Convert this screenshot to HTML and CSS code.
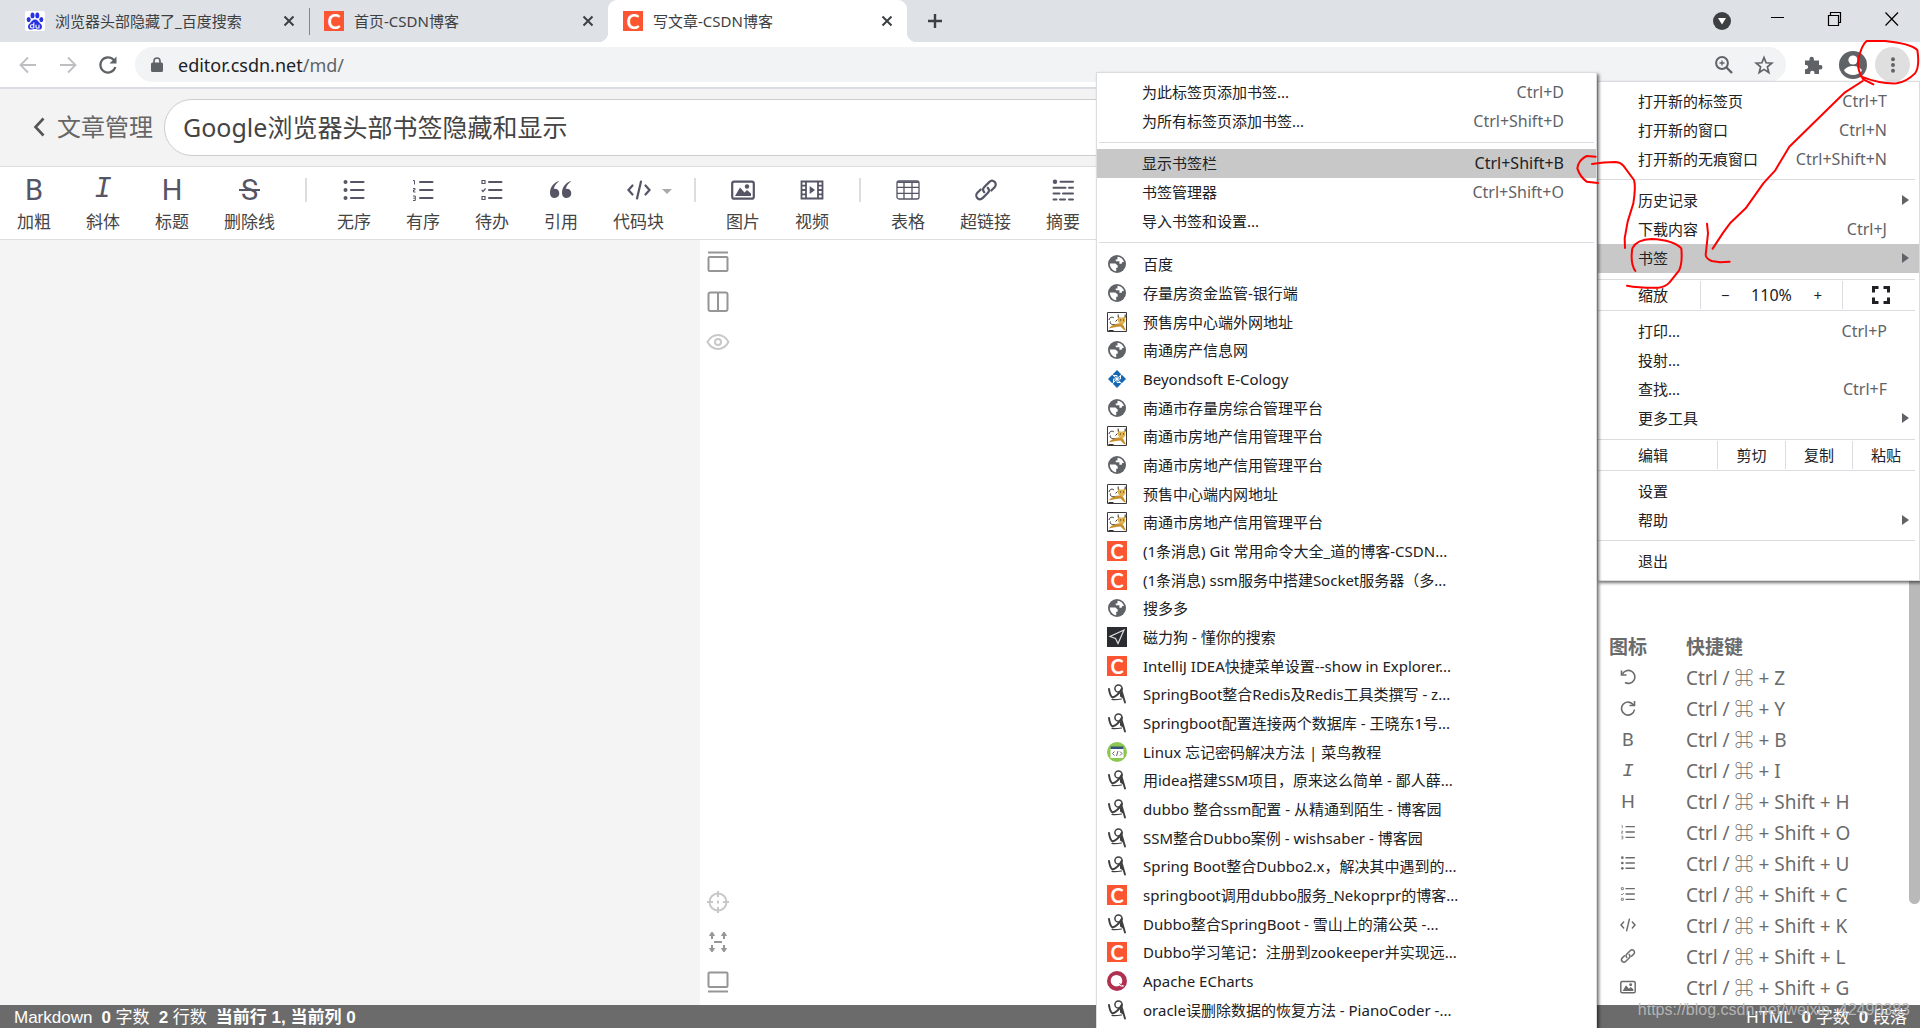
FILE: index.html
```html
<!DOCTYPE html>
<html lang="zh-CN">
<head>
<meta charset="utf-8">
<title>写文章-CSDN博客</title>
<link rel="stylesheet" href="styles.css">
</head>
<body>
<svg class="sprite" aria-hidden="true">
  <symbol id="x" viewBox="0 0 12 12"><path d="M1.5 1.5l9 9M10.5 1.5l-9 9" stroke="#3c4043" stroke-width="2" fill="none"/></symbol>
  <symbol id="baidu" viewBox="0 0 20 20"><rect width="20" height="20" rx="2" fill="#fff"/><g fill="#2932e1"><ellipse cx="3.7" cy="8.6" rx="2" ry="2.6"/><ellipse cx="7.5" cy="4.4" rx="2" ry="2.9"/><ellipse cx="12.3" cy="4.4" rx="2" ry="2.9"/><ellipse cx="16.3" cy="8.6" rx="2" ry="2.6"/><path d="M10 8.5c2.600 0 3.200 2.200 4.700 3.400 1.800 1.500 2.500 2.600 2.200 4.300-.5 2.700-2.900 2.600-4.200 2.200-1.600-.4-3.800-.4-5.400 0-1.300.4-3.700.5-4.200-2.200-.3-1.700.4-2.800 2.200-4.300C6.800 10.700 7.400 8.500 10 8.500z"/></g><path d="M8.800 11.500v5.500M8.800 13.700H7a1.600 1.600 0 0 0 0 3.300h1.800M11 13.700v2.300a1 1 0 0 0 1 1h2v-3.300" stroke="#fff" stroke-width="1.100" fill="none"/></symbol>
  <symbol id="globe" viewBox="0 0 20 20"><circle cx="10" cy="10" r="9" fill="#5f6368"/><path d="M10.500 2.800c3 .2 5.700 2.300 6.500 5.300h-1.600l-.8 1.600h-2.200V7.300H9.600c-.5 0-.9-.4-.9-.9V5.500h1.800zM2.800 9.500h5.600l2.300 2v2.300h-1.500v3.400C5.700 16.800 3 13.700 2.800 9.500z" fill="#fff"/></symbol>
  <symbol id="cat" viewBox="0 0 20 20"><path d="M.5.5h19v19H.5z" fill="#fff" stroke="#3a3a3a"/><path d="M11 4l2 1.500h3L18.300 4v5.500l-2 2.500-3 .5-2.300-3z" fill="#dfb14f"/><path d="M1.500 16.500C5 13 8 11.500 12 11.500l4 1 3 6-2-.5-3.500-3.500L9 15z" fill="#c98f2c"/><path d="M11.200 2.500v3M18.200 2.500v3M13 8h1M16 8h1M7.500 12.500c-3 .5-5-1-4-3M2 8c.5-3 3.500-3.500 5-2M8.500 9.500l2-2M1.500 18.500h5" fill="none" stroke="#333"/></symbol>
  <symbol id="beyond" viewBox="0 0 20 20"><g fill="#1467b3"><path d="M10 1l4.200 4.200L10 9.400 5.800 5.200zM14.800 5.800L19 10l-4.200 4.200-4.200-4.200zM10 10.600l4.200 4.200L10 19l-4.200-4.200zM5.200 5.800L9.400 10l-4.200 4.200L1 10z"/></g><path d="M6.500 6.500l3.500 0v3.500M13.500 6.500v3.500H10M13.500 13.500H10V10M6.500 13.500V10H10" fill="none" stroke="#fff" stroke-width="1"/></symbol>
  <symbol id="plane" viewBox="0 0 20 20"><path fill="#2b2c31" d="M0 0h20v20H0z"/><path d="M17 3L3 9.500l5.500 2 2.500 5z" fill="none" stroke="#ddd" stroke-width="1.200"/></symbol>
  <symbol id="blog" viewBox="0 0 20 20"><g fill="none" stroke="#3f3f3f" stroke-linecap="round"><circle cx="11.500" cy="4.500" r="3.600" stroke-width="1.500"/><path d="M2 5c.5 4 1.500 7 3.500 8.500 3.500-1 7-4.500 9.200-8.500" stroke-width="2"/><path d="M14.500 6.500l3.500 12" stroke-width="1.900"/><path d="M5 15.500c3 .5 6.500 0 9.500-.5" stroke-width="1.200"/></g><path d="M13 8l2 1 1.800 6-3.800-2.500z" fill="#3f3f3f"/></symbol>
  <symbol id="runoob" viewBox="0 0 20 20"><circle cx="10" cy="10" r="10" fill="#8bc751"/><path d="M3.500 5h13v11h-13z" fill="#fff"/><path d="M3.500 4.500h13V7h-13z" fill="#35527a"/><path d="M7.500 9.500L5.500 11.500l2 2M13 9.500l2 2-2 2M11 9l-1.500 5" fill="none" stroke="#666"/></symbol>
  <symbol id="echarts" viewBox="0 0 20 20"><circle cx="10" cy="10" r="10" fill="#b03050"/><circle cx="9.500" cy="9.700" r="5.800" fill="#fff"/><path d="M13 13.500l3.500 1.500-3 0z" fill="#fff" stroke="#fff"/><path d="M12.500 12.500l2.500 2" stroke="#b03050"/></symbol>
  <symbol id="ul" viewBox="0 0 24 24"><g fill="currentColor"><circle cx="3.500" cy="4" r="2"/><circle cx="3.500" cy="12" r="2"/><circle cx="3.500" cy="20" r="2"/></g><path d="M9 4h12.500M9 12h12.500M9 20h12.500" stroke="currentColor" stroke-width="2.200" stroke-linecap="round"/></symbol>
  <symbol id="ol" viewBox="0 0 24 24"><path d="M9 4h12.500M9 12h12.500M9 20h12.500" stroke="currentColor" stroke-width="2" stroke-linecap="round"/><path d="M2 2.500h1.500v4M2 10.500h2v1.500H2.500v2H4.500M2 18h2.300v4.500H2M2.300 20.200H4" stroke="currentColor" fill="none"/></symbol>
  <symbol id="todo" viewBox="0 0 24 24"><path d="M9 4h12.500M9 12h12.500M9 20h12.500" stroke="currentColor" stroke-width="2" stroke-linecap="round"/><path d="M2 2.500h3v3H2zM2 18.500h3v3H2zM1.700 12l1.300 1.500 2.600-3" stroke="currentColor" stroke-width="1.200" fill="none"/></symbol>
  <symbol id="quote" viewBox="0 0 24 24"><path d="M10.500 3C5 4 1 9 1 15c0 3 1.800 5 4.700 5 2.800 0 4.600-2 4.600-4.700 0-2.600-1.900-4.500-4.400-4.500-.5 0-.9.100-1.200.2C5.500 7.500 8 4.800 10.500 3zM22.500 3C17 4 13 9 13 15c0 3 1.800 5 4.700 5 2.800 0 4.600-2 4.600-4.700 0-2.600-1.900-4.500-4.400-4.500-.5 0-.9.100-1.200.2C17.500 7.500 20 4.800 22.500 3z" fill="currentColor"/></symbol>
  <symbol id="code" viewBox="0 0 24 24"><path d="M5.500 7.500L1.500 12l4 4.500M18.500 7.500l4 4.500-4 4.500M14 3.500L10 20.500" stroke="currentColor" stroke-width="2.200" fill="none" stroke-linecap="round"/></symbol>
  <symbol id="image" viewBox="0 0 24 24"><rect x="1.200" y="3.700" width="21.600" height="17" rx="2" fill="none" stroke="currentColor" stroke-width="2.200"/><path d="M4 18l5-8.500 4.500 5 2.500-2.500 4 3.500V18z" fill="currentColor"/><circle cx="16" cy="8.500" r="2.200" fill="currentColor"/></symbol>
  <symbol id="video" viewBox="0 0 24 24"><path d="M1.500 3.500h21v17h-21zM6 3.500v17M18 3.500v17M1.500 7.700H6M1.500 12H6M1.500 16.300H6M18 7.700h4.500M18 12h4.500M18 16.300h4.500" fill="none" stroke="currentColor" stroke-width="1.800"/><path d="M9.700 8l5.300 4-5.300 4z" fill="currentColor"/></symbol>
  <symbol id="table" viewBox="0 0 24 24"><rect x="1" y="3" width="22" height="18" rx="2" fill="none" stroke="currentColor" stroke-width="1.300"/><path d="M1.500 3.500h21v1.500h-21z" fill="currentColor"/><path d="M1 9.300h22M1 15.300h22M8 4v17M16 4v17" stroke="currentColor" stroke-width="1.300"/></symbol>
  <symbol id="link" viewBox="0 0 24 24"><g fill="none" stroke="currentColor" stroke-width="2.200" stroke-linecap="round"><path d="M10.200 14.200c-1.500-1.700-1.400-3.700.1-5.200l4.900-4.900c1.700-1.700 3.900-1.600 5.400-.2 1.500 1.500 1.500 3.800 0 5.300L17.300 12.500"/><path d="M13.800 9.800c1.500 1.700 1.400 3.700-.1 5.200l-4.900 4.900c-1.700 1.700-3.900 1.600-5.400.2-1.500-1.500-1.500-3.800 0-5.300L6.700 11.500"/></g></symbol>
  <symbol id="abstract" viewBox="0 0 24 24"><circle cx="4" cy="3.800" r="2.200" fill="currentColor"/><path d="M9.500 3.800H22M2.500 9.800h12M18 9.800h4M2.500 15.500h6M12 15.500h10M2.500 21.500h3M9 21.500h5M18 21.500h4" stroke="currentColor" stroke-width="2" stroke-linecap="round"/></symbol>
  <symbol id="undo" viewBox="0 0 16 16"><path d="M2.500 5A6.500 6.500 0 1 1 5 13.500M1.500 1.500v4.500h5" fill="none" stroke="currentColor" stroke-width="1.600"/></symbol>
  <symbol id="redo" viewBox="0 0 16 16"><path d="M13.500 5A6.500 6.500 0 1 0 14.500 9.500M14.500 1v4.500h-5" fill="none" stroke="currentColor" stroke-width="1.600"/></symbol>
</svg>

<header class="tabstrip">
  <div class="tab"><svg class="fav"><use href="#baidu"/></svg><span class="tab-title">浏览器头部隐藏了_百度搜索</span><button class="close" aria-label="关闭"><svg><use href="#x"/></svg></button></div>
  <div class="tab divided"><span class="fav csdn">C</span><span class="tab-title">首页-CSDN博客</span><button class="close" aria-label="关闭"><svg><use href="#x"/></svg></button></div>
  <div class="tab active"><span class="fav csdn">C</span><span class="tab-title">写文章-CSDN博客</span><button class="close" aria-label="关闭"><svg><use href="#x"/></svg></button></div>
  <button class="newtab" aria-label="新标签页"><svg viewBox="0 0 16 16"><path d="M8 1v14M1 8h14" stroke="#3c4043" stroke-width="2.400"/></svg></button>
  <div class="winctl">
    <button aria-label="搜索标签页"><svg viewBox="0 0 18 18"><circle cx="9" cy="9" r="9" fill="#3c4043"/><path d="M5 6h8l-4 6.500z" fill="#fff"/></svg></button>
    <button aria-label="最小化"><svg viewBox="0 0 18 18"><path d="M2 5.500h13" stroke="#000"/></svg></button>
    <button aria-label="还原"><svg viewBox="0 0 18 18"><path d="M2.500 3.500h10v10h-10zM4.500 3V.5h10v10H13" fill="none" stroke="#000" stroke-width="1.200"/></svg></button>
    <button aria-label="关闭窗口"><svg viewBox="0 0 18 18"><path d="M2.500.5l12.500 13M15 .5l-12.500 13" stroke="#000" stroke-width="1.200"/></svg></button>
  </div>
</header>

<div class="addressbar">
  <button aria-label="后退"><svg viewBox="0 0 20 20"><path d="M18 10H3M10 2.500L2.500 10l7.500 7.500" fill="none" stroke="#bdbfc2" stroke-width="1.800"/></svg></button>
  <button aria-label="前进"><svg viewBox="0 0 20 20"><path d="M2 10h15M10 2.500l7.500 7.500-7.500 7.500" fill="none" stroke="#bdbfc2" stroke-width="1.800"/></svg></button>
  <button aria-label="重新加载"><svg viewBox="0 0 20 20"><path d="M15.800 5A7.600 7.600 0 1 0 17.300 12" fill="none" stroke="#5f6368" stroke-width="2.200"/><path d="M18.500 1.500v7h-7z" fill="#5f6368"/></svg></button>
  <div class="omnibox">
    <svg class="lock" viewBox="0 0 12 16"><rect x="0" y="5.500" width="12" height="9.500" rx="1.500" fill="#5f6368"/><path d="M3 6V4a3 3 0 0 1 6 0v2" fill="none" stroke="#5f6368" stroke-width="1.600"/></svg>
    <span class="url">editor.csdn.net<i>/md/</i></span>
    <button aria-label="缩放"><svg viewBox="0 0 20 20"><g fill="none" stroke="#5f6368"><circle cx="8" cy="8" r="5.900" stroke-width="2"/><path d="M12.500 12.500l5.500 5.500" stroke-width="2.400"/><path d="M8 5.500v5M5.500 8h5" stroke-width="1.300"/></g></svg></button>
    <button aria-label="收藏"><svg viewBox="0 0 20 20"><path d="M10 2.500l2.100 5.300 5.700.4-4.400 3.700 1.400 5.600-4.800-3.100-4.800 3.100 1.400-5.600L2.200 8.200l5.700-.4z" fill="none" stroke="#5f6368" stroke-width="1.700"/></svg></button>
  </div>
  <button class="ext" aria-label="扩展程序"><svg viewBox="0 0 20 20"><path d="M2 5.500h4.500V4a2.200 2.200 0 0 1 4.400 0v1.500H16V10h1.300a2.200 2.200 0 0 1 0 4.400H16V19h-4.500v-1a2.200 2.200 0 0 0-4.400 0v1H2v-4.800h1a2 2 0 0 0 0-4.200H2z" fill="#5f6368"/></svg></button>
  <button class="avatar" aria-label="用户"><svg viewBox="0 0 28 28"><circle cx="14" cy="14" r="14" fill="#5f6368"/><circle cx="14" cy="9" r="4.600" fill="#fff"/><path d="M5 19.500c1.500-3.300 6-4.500 9-4.500s7.500 1.200 9 4.500c-2 2.800-5.500 4.500-9 4.500s-7-1.700-9-4.500z" fill="#fff"/></svg></button>
  <button class="more" aria-label="菜单"><svg viewBox="0 0 20 20"><g fill="#5f6368"><circle cx="10" cy="3.500" r="2.200"/><circle cx="10" cy="10" r="2.200"/><circle cx="10" cy="16.500" r="2.200"/></g></svg></button>
</div>

<div class="titlebar">
  <a class="back" href="#"><svg viewBox="0 0 12 20"><path d="M10.500 1.500L2.500 10l8 8.500" fill="none" stroke="#555" stroke-width="2.600"/></svg>文章管理</a>
  <input class="title" aria-label="文章标题" value="Google浏览器头部书签隐藏和显示">
</div>

<div class="tools">
  <button><b class="glyph">B</b>加粗</button>
  <button><b class="glyph slab">I</b>斜体</button>
  <button><b class="glyph">H</b>标题</button>
  <button><b class="glyph strike">S</b>删除线</button>
  <span class="vsep"></span>
  <button><svg><use href="#ul"/></svg>无序</button>
  <button><svg><use href="#ol"/></svg>有序</button>
  <button><svg><use href="#todo"/></svg>待办</button>
  <button><svg><use href="#quote"/></svg>引用</button>
  <button class="caret"><svg><use href="#code"/></svg>代码块</button>
  <span class="vsep"></span>
  <button><svg><use href="#image"/></svg>图片</button>
  <button><svg><use href="#video"/></svg>视频</button>
  <span class="vsep"></span>
  <button><svg><use href="#table"/></svg>表格</button>
  <button><svg><use href="#link"/></svg>超链接</button>
  <button><svg><use href="#abstract"/></svg>摘要</button>
</div>

<main class="editor">
  <div class="source"></div>
  <div class="rail">
    <button aria-label="隐藏工具栏"><svg viewBox="0 0 24 24"><path d="M2 2.500h20"/><rect x="2.500" y="7" width="19" height="14" rx="1"/></svg></button>
    <button aria-label="双栏"><svg viewBox="0 0 24 24"><rect x="2.500" y="2.500" width="19" height="18.500" rx="2"/><path d="M12 2.500V21"/></svg></button>
    <button class="faint" aria-label="预览"><svg viewBox="0 0 24 24"><path d="M1.500 12C4 7.500 8 5 12 5s8 2.500 10.500 7C20 16.500 16 19 12 19S4 16.500 1.500 12z"/><circle cx="12" cy="12" r="3"/></svg></button>
    <span class="fill"></span>
    <button class="faint" aria-label="定位"><svg viewBox="0 0 24 24"><circle cx="12" cy="12" r="8.500"/><path d="M12 1v6M12 17v6M1 12h6M17 12h6M12 10.500v3"/></svg></button>
    <button aria-label="同步滚动"><svg viewBox="0 0 24 24"><path d="M6 4v5M18 4v5M6 15v5M18 15v5M8 12h8"/><path d="M3.500 5.500L6 2l2.500 3.500zM15.500 5.500L18 2l2.500 3.500zM3.500 18.500L6 22l2.500-3.500zM15.500 18.500L18 22l2.500-3.500z" fill="currentColor" stroke-width="1"/></svg></button>
    <button aria-label="隐藏底栏"><svg viewBox="0 0 24 24"><rect x="2.500" y="2.500" width="19" height="14.500" rx="1"/><path d="M2 21.500h20"/></svg></button>
  </div>
  <div class="preview"></div>
  <div class="help">
    <table>
      <tr><th>图标</th><th>快捷键</th></tr>
      <tr><td><svg><use href="#undo"/></svg></td><td>Ctrl / ⌘ + Z</td></tr>
      <tr><td><svg><use href="#redo"/></svg></td><td>Ctrl / ⌘ + Y</td></tr>
      <tr><td><span class="mini">B</span></td><td>Ctrl / ⌘ + B</td></tr>
      <tr><td><span class="mini slab">I</span></td><td>Ctrl / ⌘ + I</td></tr>
      <tr><td><span class="mini">H</span></td><td>Ctrl / ⌘ + Shift + H</td></tr>
      <tr><td><svg><use href="#ol"/></svg></td><td>Ctrl / ⌘ + Shift + O</td></tr>
      <tr><td><svg><use href="#ul"/></svg></td><td>Ctrl / ⌘ + Shift + U</td></tr>
      <tr><td><svg><use href="#todo"/></svg></td><td>Ctrl / ⌘ + Shift + C</td></tr>
      <tr><td><svg><use href="#code"/></svg></td><td>Ctrl / ⌘ + Shift + K</td></tr>
      <tr><td><svg><use href="#link"/></svg></td><td>Ctrl / ⌘ + Shift + L</td></tr>
      <tr><td><svg><use href="#image"/></svg></td><td>Ctrl / ⌘ + Shift + G</td></tr>
    </table>
    <div class="scrollbar"></div>
  </div>
</main>

<footer class="status">
  <span>Markdown</span><span><b>0</b> 字数</span><span><b>2</b> 行数</span><b>当前行 1, 当前列 0</b>
  <span class="fill"></span>
  <span>HTML</span><span><b>0</b> 字数</span><span><b>0</b> 段落</span>
</footer>
<div class="watermark">https://blog.csdn.net/weixin_42490383</div>

<nav class="menu main-menu">
  <button class="item">打开新的标签页<kbd>Ctrl+T</kbd></button>
  <button class="item">打开新的窗口<kbd>Ctrl+N</kbd></button>
  <button class="item">打开新的无痕窗口<kbd>Ctrl+Shift+N</kbd></button>
  <hr>
  <button class="item sub">历史记录</button>
  <button class="item">下载内容<kbd>Ctrl+J</kbd></button>
  <button class="item sub on">书签</button>
  <div class="split zoom"><span>缩放</span><div class="level"><button>−</button><span>110%</span><button>+</button></div><button aria-label="全屏"><svg viewBox="0 0 18 18"><path d="M1.500 6.500v-5h5M11.500 1.500h5v5M16.500 11.500v5h-5M6.500 16.500h-5v-5" fill="none" stroke="#202124" stroke-width="3"/></svg></button></div>
  <button class="item">打印...<kbd>Ctrl+P</kbd></button>
  <button class="item">投射...</button>
  <button class="item">查找...<kbd>Ctrl+F</kbd></button>
  <button class="item sub">更多工具</button>
  <div class="split edit"><span>编辑</span><button>剪切</button><button>复制</button><button>粘贴</button></div>
  <button class="item">设置</button>
  <button class="item sub">帮助</button>
  <hr>
  <button class="item">退出</button>
</nav>

<nav class="menu bookmarks">
  <button class="item">为此标签页添加书签...<kbd>Ctrl+D</kbd></button>
  <button class="item">为所有标签页添加书签...<kbd>Ctrl+Shift+D</kbd></button>
  <hr>
  <button class="item on">显示书签栏<kbd>Ctrl+Shift+B</kbd></button>
  <button class="item">书签管理器<kbd>Ctrl+Shift+O</kbd></button>
  <button class="item">导入书签和设置...</button>
  <hr>
  <div class="list">
    <a href="#"><svg><use href="#globe"/></svg>百度</a>
    <a href="#"><svg><use href="#globe"/></svg>存量房资金监管-银行端</a>
    <a href="#"><svg><use href="#cat"/></svg>预售房中心端外网地址</a>
    <a href="#"><svg><use href="#globe"/></svg>南通房产信息网</a>
    <a href="#"><svg><use href="#beyond"/></svg>Beyondsoft E-Cology</a>
    <a href="#"><svg><use href="#globe"/></svg>南通市存量房综合管理平台</a>
    <a href="#"><svg><use href="#cat"/></svg>南通市房地产信用管理平台</a>
    <a href="#"><svg><use href="#globe"/></svg>南通市房地产信用管理平台</a>
    <a href="#"><svg><use href="#cat"/></svg>预售中心端内网地址</a>
    <a href="#"><svg><use href="#cat"/></svg>南通市房地产信用管理平台</a>
    <a href="#"><span class="fav csdn">C</span>(1条消息) Git 常用命令大全_道的博客-CSDN...</a>
    <a href="#"><span class="fav csdn">C</span>(1条消息) ssm服务中搭建Socket服务器（多...</a>
    <a href="#"><svg><use href="#globe"/></svg>搜多多</a>
    <a href="#"><svg><use href="#plane"/></svg>磁力狗 - 懂你的搜索</a>
    <a href="#"><span class="fav csdn">C</span>IntelliJ IDEA快捷菜单设置--show in Explorer...</a>
    <a href="#"><svg><use href="#blog"/></svg>SpringBoot整合Redis及Redis工具类撰写 - z...</a>
    <a href="#"><svg><use href="#blog"/></svg>Springboot配置连接两个数据库 - 王晓东1号...</a>
    <a href="#"><svg><use href="#runoob"/></svg>Linux 忘记密码解决方法 | 菜鸟教程</a>
    <a href="#"><svg><use href="#blog"/></svg>用idea搭建SSM项目，原来这么简单 - 鄙人薛...</a>
    <a href="#"><svg><use href="#blog"/></svg>dubbo 整合ssm配置 - 从精通到陌生 - 博客园</a>
    <a href="#"><svg><use href="#blog"/></svg>SSM整合Dubbo案例 - wishsaber - 博客园</a>
    <a href="#"><svg><use href="#blog"/></svg>Spring Boot整合Dubbo2.x，解决其中遇到的...</a>
    <a href="#"><span class="fav csdn">C</span>springboot调用dubbo服务_Nekoprpr的博客...</a>
    <a href="#"><svg><use href="#blog"/></svg>Dubbo整合SpringBoot - 雪山上的蒲公英 -...</a>
    <a href="#"><span class="fav csdn">C</span>Dubbo学习笔记：注册到zookeeper并实现远...</a>
    <a href="#"><svg><use href="#echarts"/></svg>Apache ECharts</a>
    <a href="#"><svg><use href="#blog"/></svg>oracle误删除数据的恢复方法 - PianoCoder -...</a>
  </div>
</nav>

<svg class="ink" viewBox="0 0 1020 930" aria-hidden="true">
  <path d="M880 253L850 238Q828 205 836 175Q845 135 860 123L915 123Q990 130 1012 150Q1020 200 1005 220Q980 245 950 250Q900 252 842 229"/>
  <path d="M848 243L795 277L628 440L585 512L550 550L497 625L450 670L430 697L398 746M381 671L384 700L377 765Q378 776 395 783L420 787L449 785"/>
  <path d="M166 813Q150 790 157 745Q170 718 215 717Q280 720 304 745Q308 790 297 812L268 848Q255 862 235 863Q180 864 141 857"/>
  <path d="M135 744L134 715L143 665L160 610Q168 560 162 540L130 497Q122 487 108 486Q70 486 36 492M47 470L20 468Q-5 480 -8 505Q0 530 20 545L54 549"/>
</svg>
</body>
</html>
```

FILE: styles.css
```css
* { box-sizing: border-box; }
body {
  margin: 0;
  height: 100vh;
  display: flex;
  flex-direction: column;
  position: relative;
  overflow: hidden;
  background: #fff;
  color: #202124;
  font: 15px/20px "Noto Sans", "Noto Sans CJK SC", sans-serif;
}
button {
  border: 0;
  padding: 0;
  background: none;
  color: inherit;
  font: inherit;
}
a { color: inherit; text-decoration: none; }
svg { display: block; flex: none; }
.sprite { position: absolute; width: 0; height: 0; }
.fill { flex: 1; }
.fav { width: 20px; height: 20px; flex: none; }
.csdn {
  background: #fc5531;
  color: #fff;
  font: 700 20px/20px Lato, sans-serif;
  text-align: center;
}

/* Tab strip */
.tabstrip {
  height: 42px;
  flex: none;
  display: flex;
  background: #dee1e6;
  padding-left: 10px;
}
.tab {
  width: 299px;
  padding: 0 14px 0 15px;
  display: flex;
  align-items: center;
  gap: 10px;
  position: relative;
  color: #3c4043;
}
.tab-title { flex: 1; white-space: nowrap; }
.tab.divided { border-left: 1px solid #80868b; border-image: linear-gradient(transparent 9px, #80868b 9px 34px, transparent 34px) 1; padding-left: 14px; }
.tab.active { background: #fff; border-radius: 9px 9px 0 0; }
.tab.active::before, .tab.active::after {
  content: "";
  position: absolute;
  bottom: 0;
  width: 9px;
  height: 9px;
}
.tab.active::before { right: 100%; background: radial-gradient(circle at 0 0, #dee1e6 9px, #fff 9px); }
.tab.active::after { left: 100%; background: radial-gradient(circle at 100% 0, #dee1e6 9px, #fff 9px); }
.close svg { width: 12px; height: 12px; }
.newtab { margin-left: 20px; }
.newtab svg { width: 16px; height: 16px; }
.winctl { margin-left: auto; display: flex; }
.winctl button { display: flex; align-items: center; justify-content: center; width: 57px; }
.winctl button:first-child { width: 40px; margin-right: 7px; }
.winctl svg { width: 18px; height: 18px; }

/* Address bar */
.addressbar {
  height: 47px;
  flex: none;
  display: flex;
  align-items: center;
  gap: 20px;
  padding: 0 10px 0 18px;
  border-bottom: 2px solid #dadce4;
}
.addressbar svg { width: 20px; height: 20px; }
.omnibox {
  flex: 1;
  height: 35px;
  margin: 0 -3px;
  border-radius: 18px;
  background: #f1f3f4;
  display: flex;
  align-items: center;
  gap: 20px;
  padding: 0 12px 0 16px;
}
.omnibox .lock { width: 12px; height: 16px; }
.url { flex: 1; font-size: 18px; margin-left: -5px; }
.url i { font-style: normal; color: #5f6368; }
.addressbar .ext { margin-right: -4px; }
.addressbar .avatar { margin-right: -12px; }
.addressbar .avatar svg { width: 28px; height: 28px; }
.more { width: 35px; height: 35px; border-radius: 50%; background: #dfdfdf; display: flex; align-items: center; justify-content: center; }
.addressbar .more svg { width: 18px; height: 18px; }

/* Article title */
.titlebar {
  height: 77px;
  flex: none;
  display: flex;
  align-items: center;
  gap: 11px;
  padding: 0 24px 0 33px;
  background: #f3f3f3;
}
.back { display: flex; align-items: center; gap: 12px; font-size: 24px; color: #666; padding-bottom: 2px; }
.back svg { width: 12px; height: 20px; }
.title {
  flex: 1;
  height: 57px;
  border: 1px solid #ccc;
  border-radius: 28px;
  padding: 0 18px 4px;
  color: #444;
  font: 25px "Noto Sans", "Noto Sans CJK SC", sans-serif;
}

/* Formatting tools */
.tools {
  height: 74px;
  flex: none;
  display: flex;
  gap: 35px;
  padding: 8px 17px 0;
  border: solid #ddd;
  border-width: 1px 0;
  color: #444;
  font-size: 17px;
  line-height: 24px;
}
.tools button { display: flex; flex-direction: column; align-items: center; gap: 5px; height: 62px; position: relative; white-space: nowrap; }
.tools svg { width: 24px; height: 24px; margin: 3px 0; color: #555566; }
.glyph { font: 400 29px/30px Roboto, sans-serif; color: #555566; }
.slab { font-family: "Liberation Mono", monospace; font-style: italic; }
.strike { padding: 0 2px; background: linear-gradient(#555566, #555566) center / 100% 2px no-repeat; }
.vsep { width: 2px; height: 24px; margin: 3px -5px 0; background: #ddd; }
.caret::after {
  content: "";
  position: absolute;
  right: -8px;
  top: 14px;
  border: 5px solid transparent;
  border-top-color: #aaa;
}

/* Editor */
.editor {
  flex: 1;
  min-height: 0;
  display: grid;
  grid-template-columns: 700fr 36px 861fr 323px;
}
.source { background: #f4f4f4; }
.rail { display: flex; flex-direction: column; padding: 2px 0 3px; }
.rail button { height: 40px; display: flex; align-items: center; justify-content: center; color: #969696; }
.rail .faint { color: #c8c8c8; }
.rail svg { width: 24px; height: 24px; fill: none; stroke: currentColor; stroke-width: 2; stroke-linejoin: round; }
.help { display: flex; flex-direction: column; justify-content: flex-end; position: relative; padding-left: 12px; color: #6b6b6b; }
.help table { border-collapse: collapse; align-self: flex-start; font-size: 19px; }
.help th { text-align: left; }
.help th, .help td { height: 31px; padding: 0 0 3px; line-height: 28px; white-space: nowrap; }
.help th:first-child { width: 77px; }
.help td svg { width: 16px; height: 16px; margin: 0 11px 3px; }
.mini { display: block; width: 38px; text-align: center; font: 19px/24px Roboto, sans-serif; }
.mini.slab { font-family: "Liberation Mono", monospace; font-style: italic; }
.scrollbar { position: absolute; right: 0; top: 0; bottom: 101px; width: 11px; border-radius: 6px; background: #b9b9b9; }

/* Status bar */
.status {
  height: 23px;
  flex: none;
  display: flex;
  gap: 9px;
  padding: 0 13px 0 14px;
  background: #6b6b6b;
  color: #fff;
  font: 17px/26px "Liberation Sans", "Noto Sans CJK SC", sans-serif;
  white-space: nowrap;
}
.watermark {
  position: absolute;
  right: 10px;
  bottom: 8px;
  color: rgba(190, 190, 190, .9);
  font: 16px/20px "Liberation Sans", sans-serif;
}

/* Menus */
.menu {
  position: absolute;
  display: flex;
  flex-direction: column;
  background: #fff;
  border: 1px solid #dadce0;
  box-shadow: 2px 2px 3px rgba(0, 0, 0, .55);
}
.menu hr { width: calc(100% - 4px); margin: 5px 2px 6px; border: 0; border-top: 1px solid #dadce0; }
.item { height: 29px; flex: none; display: flex; align-items: center; justify-content: space-between; text-align: left; padding: 0 32px 2px 40px; }
.item kbd { font: inherit; font-size: 16px; color: #5f6368; }
.item.on { background: #c8c8c8; }
.item.on kbd { color: #202124; }
.main-menu { right: 0; top: 81px; width: 323px; padding: 5px 0 4px; }
.main-menu hr { margin-left: 0; }
.sub { padding-right: 10px; }
.sub::after { content: ""; border: solid transparent; border-width: 5px 0 5px 7px; border-left-color: #5f6368; }
.split { height: 32px; margin: 6px 4px 6px 0; border: solid #dadce0; border-width: 1px 0; display: grid; align-items: center; padding-left: 40px; }
.split > button, .level { height: 28px; border-left: 1px solid #dadce0; display: flex; align-items: center; justify-content: center; }
.split > button:last-child { padding-left: 4px; }
.zoom { grid-template-columns: 62px 142px 1fr; }
.edit { grid-template-columns: 79px 68px 67px 1fr; }
.level { justify-content: space-between; padding: 0 20px; }
.level span { font-size: 16px; }
.zoom svg { width: 18px; height: 18px; }
.bookmarks { right: 323px; top: 72px; bottom: 0; width: 501px; padding-top: 5px; border-bottom: 0; }
.bookmarks hr { margin-top: 6px; }
.bookmarks .item { padding-left: 45px; }
.list { flex: 1; display: flex; flex-direction: column; padding: 1px 0 4px; }
.list a { flex: 1; display: flex; align-items: center; gap: 16px; padding-left: 10px; white-space: nowrap; }
.list svg { width: 20px; height: 20px; }

/* Pen marks over the menus */
.ink {
  position: absolute;
  right: 0;
  top: 0;
  width: 340px;
  height: 310px;
  overflow: visible;
  pointer-events: none;
  fill: none;
  stroke: #f00;
  stroke-width: 6;
  stroke-linecap: round;
  stroke-linejoin: round;
}
```
